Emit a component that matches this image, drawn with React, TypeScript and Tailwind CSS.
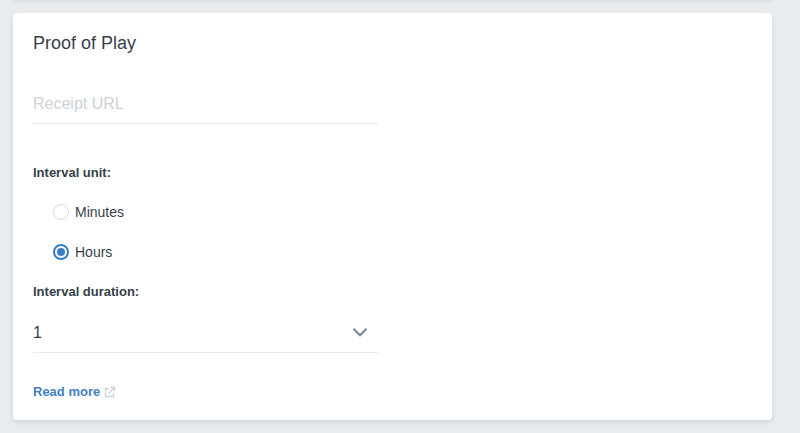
import { useState } from "react";

const units = ["Minutes", "Hours"]

const ChevronIcon = () => (
  <svg width="16" height="10" viewBox="0 0 16 10" fill="none" stroke="#7b8b9d" strokeWidth="2.2" className="pointer-events-none absolute right-[10px] top-[14px]">
    <path d="M1.5 1.7 L8 8.2 L14.5 1.7" />
  </svg>
)

const ExternalIcon = () => (
  <svg width="12" height="12" viewBox="0 0 12 12" fill="none" stroke="#c9d1d8" strokeWidth="1.3">
    <path d="M5 2.5 H1.5 V10.5 H9.5 V7" />
    <path d="M4.4 7.6 L10.2 1.8" />
    <path d="M7 1.3 H10.7 V5" />
  </svg>
)

const ProofOfPlay = () => {
  const [receiptUrl, setReceiptUrl] = useState("")
  const [unit, setUnit] = useState("Hours")
  const [duration, setDuration] = useState("1")

  return (
    <section className="rounded-sm bg-white px-5 pt-[17px] pb-[17px] shadow-[0_2px_4px_rgba(60,75,90,0.16)]">
      <h2 className="text-lg leading-[26px]">Proof of Play</h2>

      <div className="max-w-[345px]">
        <input
          type="url"
          aria-label="Receipt URL"
          placeholder="Receipt URL"
          value={receiptUrl}
          onChange={(e) => setReceiptUrl(e.target.value)}
          className="mt-7 block h-10 w-full border-b border-[#e9ecee] text-base outline-none placeholder:text-[#ccd3da]"
        />

        <fieldset className="mt-10">
          <legend className="text-[13px] leading-[18px] font-bold">Interval unit:</legend>
          <div className="mt-[10px] pl-5">
            {units.map((u) => (
              <label key={u} className="flex h-10 cursor-pointer items-center gap-[6px] text-sm">
                <input
                  type="radio"
                  name="unit"
                  value={u}
                  checked={unit === u}
                  onChange={() => setUnit(u)}
                  className="peer sr-only"
                />
                <span className="flex size-4 items-center justify-center rounded-full border border-[#d5dce4] peer-checked:border-2 peer-checked:border-[#3f7dc4] peer-checked:*:bg-[#3f7dc4]">
                  <span className="size-2 rounded-full" />
                </span>
                {u}
              </label>
            ))}
          </div>
        </fieldset>

        <label htmlFor="duration" className="mt-[11px] block text-[13px] leading-[18px] font-bold">Interval duration:</label>
        <div className="relative mt-3">
          <select
            id="duration"
            value={duration}
            onChange={(e) => setDuration(e.target.value)}
            className="block h-10 w-full appearance-none border-b border-[#e9ecee] text-base outline-none"
          >
            <option>1</option>
            <option>2</option>
            <option>3</option>
            <option>6</option>
            <option>12</option>
          </select>
          <ChevronIcon />
        </div>
      </div>

      <a href="#read-more" className="mt-[30px] inline-flex items-center gap-1 text-[13px] leading-[18px] font-bold text-[#4480c5]">
        Read more
        <ExternalIcon />
      </a>
    </section>
  )
}

const App = () => {
  return (
    <main className="min-h-screen bg-[#e8ecef] pr-7 pb-3 pl-[13px] font-['Liberation_Sans',Arial,sans-serif] text-[#363f48]">
      <div className="mb-3 h-px rounded-b-sm bg-[#dfe3e6] shadow-[0_1px_2px_rgba(60,75,90,0.12)]" />
      <ProofOfPlay />
    </main>
  )
}

export default App
